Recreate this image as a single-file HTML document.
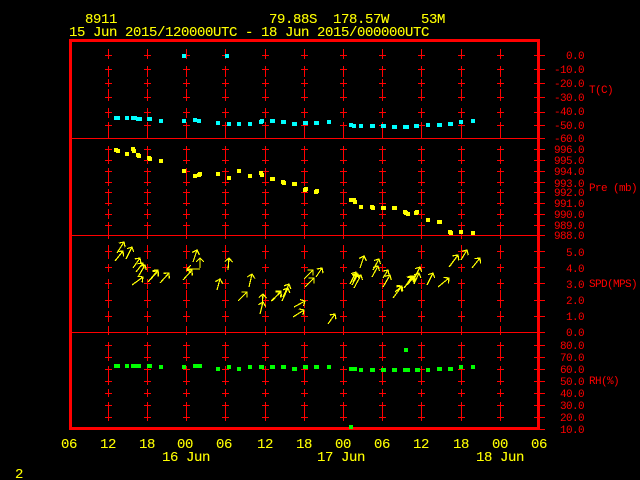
<!DOCTYPE html>
<html><head><meta charset="utf-8"><style>
html,body{margin:0;padding:0;background:#000;width:640px;height:480px;overflow:hidden}
svg{display:block}
text{font-family:"Liberation Mono",monospace;white-space:pre}
.y{fill:#ff0;stroke:#ff0;stroke-width:.1px;font-size:14px;letter-spacing:-.4px}
.r{fill:#f00;font-size:11px;letter-spacing:-.6px}
.e{text-anchor:end}
</style></head><body>
<svg width="640" height="480" viewBox="0 0 640 480" shape-rendering="crispEdges">
<defs>
<g id="c" fill="none" stroke="#f00" stroke-width="1">
<path d="M.5 49V59M.5 66V77M.5 79V87M.5 89V101M.5 108V118M.5 122V138M.5 146V164M.5 168V186M.5 189V206M.5 209V219M.5 222V239M.5 245V259M.5 264V272M.5 279V289M.5 290V308M.5 311V322M.5 326V335M.5 342V361M.5 366V385M.5 389V397M.5 402V421"/>
<path d="M-3 55.5H4M-3 69.5H4M-3 83.5H4M-3 97.5H4M-3 112.5H4M-3 125.5H4M-3 149.5H4M-3 160.5H4M-3 171.5H4M-3 182.5H4M-3 192.5H4M-3 203.5H4M-3 214.5H4M-3 225.5H4M-3 251.5H4M-3 267.5H4M-3 283.5H4M-3 300.5H4M-3 316.5H4M-3 345.5H4M-3 357.5H4M-3 369.5H4M-3 381.5H4M-3 393.5H4M-3 405.5H4M-3 417.5H4"/>
</g>
<marker id="a" markerUnits="userSpaceOnUse" orient="auto" markerWidth="14" markerHeight="14" refX="7" refY="7" overflow="visible">
<path d="M3.2 3.2L7 7L3.2 10.8" fill="none" stroke="#ff0" stroke-width="1.2"/>
</marker>
</defs>

<use href="#c" x="108"/><use href="#c" x="147"/><use href="#c" x="186"/><use href="#c" x="225"/><use href="#c" x="265"/><use href="#c" x="304"/><use href="#c" x="343"/><use href="#c" x="382"/><use href="#c" x="421"/><use href="#c" x="461"/><use href="#c" x="500"/>

<path fill="none" stroke="#f00" d="M72 138.500H545M72 235.500H545M72 332.500H545M534 55.500H545M534 69.500H545M534 83.500H545M534 97.500H545M534 112.500H545M534 125.500H545M534 149.500H545M534 160.500H545M534 171.500H545M534 182.500H545M534 192.500H545M534 203.500H545M534 214.500H545M534 225.500H545M534 251.500H545M534 267.500H545M534 283.500H545M534 300.500H545M534 316.500H545M534 345.500H545M534 357.500H545M534 369.500H545M534 381.500H545M534 393.500H545M534 405.500H545M534 417.500H545M534 429.500H545"/>
<rect x="70.500" y="40.500" width="468" height="388" fill="none" stroke="#f00" stroke-width="3"/>

<path fill="#0ff" d="M182 54h4v4h-4zM225 54h4v4h-4zM114 116h4v4h-4zM116 116h4v4h-4zM125 116h4v4h-4zM131 116h4v4h-4zM133 116h4v4h-4zM136 117h4v4h-4zM138 117h4v4h-4zM147 117h5v4h-5zM159 119h4v4h-4zM182 119h4v4h-4zM193 118h4v4h-4zM197 119h4v4h-4zM216 121h4v4h-4zM227 122h4v4h-4zM237 122h4v4h-4zM248 122h4v4h-4zM259 120h4v4h-4zM260 119h4v4h-4zM270 119h5v4h-5zM281 120h5v4h-5zM292 122h5v4h-5zM303 121h5v4h-5zM314 121h5v4h-5zM327 120h4v4h-4zM349 123h4v4h-4zM352 124h4v4h-4zM359 124h4v4h-4zM370 124h5v4h-5zM381 124h5v4h-5zM392 125h5v4h-5zM403 125h4v4h-4zM405 125h4v4h-4zM414 124h5v4h-5zM426 123h4v4h-4zM437 123h5v4h-5zM448 122h5v4h-5zM459 120h4v4h-4zM471 119h4v4h-4z"/>

<path fill="#ff0" d="M114 148h4v4h-4zM116 149h4v4h-4zM125 152h4v4h-4zM131 147h4v4h-4zM132 149h4v4h-4zM136 153h4v4h-4zM137 154h4v4h-4zM147 156h4v4h-4zM148 157h4v4h-4zM159 159h4v4h-4zM182 169h4v4h-4zM193 174h4v4h-4zM197 173h4v4h-4zM198 172h4v4h-4zM216 172h4v4h-4zM227 176h4v4h-4zM237 169h4v4h-4zM248 174h4v4h-4zM259 171h4v4h-4zM260 173h4v4h-4zM270 177h5v4h-5zM281 180h4v4h-4zM282 181h4v4h-4zM292 182h5v4h-5zM303 188h4v4h-4zM304 187h4v4h-4zM314 190h4v4h-4zM315 189h4v4h-4zM349 198h4v4h-4zM352 198h4v4h-4zM353 200h4v4h-4zM359 205h4v4h-4zM370 205h4v4h-4zM371 206h4v4h-4zM381 206h5v4h-5zM392 206h5v4h-5zM403 210h4v4h-4zM404 211h4v4h-4zM406 212h4v4h-4zM414 211h4v4h-4zM415 210h4v4h-4zM426 218h4v4h-4zM437 220h5v4h-5zM448 230h4v4h-4zM449 231h4v4h-4zM459 230h4v4h-4zM471 231h4v4h-4z"/>

<path fill="#0f0" d="M114 364h6v4h-6zM125 364h4v4h-4zM131 364h6v4h-6zM136 364h5v4h-5zM147 364h5v4h-5zM159 365h4v4h-4zM182 365h4v4h-4zM193 364h5v4h-5zM197 364h5v4h-5zM216 367h4v4h-4zM227 365h4v4h-4zM237 367h4v4h-4zM248 365h4v4h-4zM259 365h5v4h-5zM270 365h5v4h-5zM281 365h5v4h-5zM292 367h5v4h-5zM303 365h5v4h-5zM314 365h5v4h-5zM327 365h4v4h-4zM349 367h5v4h-5zM353 367h4v4h-4zM359 368h4v4h-4zM370 368h5v4h-5zM381 368h5v4h-5zM392 368h5v4h-5zM403 368h7v4h-7zM415 368h5v4h-5zM426 368h4v4h-4zM437 367h5v4h-5zM448 367h5v4h-5zM459 365h4v4h-4zM471 365h4v4h-4zM404 348h4v4h-4zM349 425h4v4h-4z"/>

<g stroke="#ff0" stroke-width="1.2" fill="none">
<line x1="117" y1="253" x2="124" y2="242" marker-end="url(#a)"/>
<line x1="115" y1="261" x2="123" y2="251" marker-end="url(#a)"/>
<line x1="126" y1="259" x2="132" y2="247" marker-end="url(#a)"/>
<line x1="133" y1="268" x2="140" y2="258" marker-end="url(#a)"/>
<line x1="136" y1="272" x2="143" y2="263" marker-end="url(#a)"/>
<line x1="138" y1="277" x2="145" y2="265" marker-end="url(#a)"/>
<line x1="132" y1="285" x2="143" y2="277" marker-end="url(#a)"/>
<line x1="148" y1="282" x2="158" y2="270" marker-end="url(#a)"/>
<line x1="150" y1="280" x2="158" y2="271" marker-end="url(#a)"/>
<line x1="160" y1="283" x2="169" y2="273" marker-end="url(#a)"/>
<line x1="183" y1="280" x2="192" y2="270" marker-end="url(#a)"/>
<line x1="200" y1="269" x2="187" y2="269" marker-end="url(#a)"/>
<line x1="200" y1="268" x2="200" y2="258" marker-end="url(#a)"/>
<line x1="193" y1="262" x2="197" y2="250" marker-end="url(#a)"/>
<line x1="217" y1="290" x2="220" y2="279" marker-end="url(#a)"/>
<line x1="228" y1="270" x2="229" y2="258" marker-end="url(#a)"/>
<line x1="249" y1="287" x2="252" y2="274" marker-end="url(#a)"/>
<line x1="238" y1="301" x2="247" y2="292" marker-end="url(#a)"/>
<line x1="260" y1="314" x2="263" y2="302" marker-end="url(#a)"/>
<line x1="262" y1="307" x2="263" y2="294" marker-end="url(#a)"/>
<line x1="271" y1="301" x2="281" y2="292" marker-end="url(#a)"/>
<line x1="272" y1="301" x2="281" y2="291" marker-end="url(#a)"/>
<line x1="282" y1="301" x2="288" y2="288" marker-end="url(#a)"/>
<line x1="283" y1="297" x2="289" y2="284" marker-end="url(#a)"/>
<line x1="294" y1="307" x2="305" y2="301" marker-end="url(#a)"/>
<line x1="293" y1="317" x2="304" y2="310" marker-end="url(#a)"/>
<line x1="305" y1="287" x2="314" y2="278" marker-end="url(#a)"/>
<line x1="304" y1="279" x2="313" y2="270" marker-end="url(#a)"/>
<line x1="316" y1="277" x2="322" y2="268" marker-end="url(#a)"/>
<line x1="328" y1="324" x2="335" y2="314" marker-end="url(#a)"/>
<line x1="360" y1="268" x2="364" y2="256" marker-end="url(#a)"/>
<line x1="350" y1="284" x2="356" y2="272" marker-end="url(#a)"/>
<line x1="352" y1="285" x2="358" y2="274" marker-end="url(#a)"/>
<line x1="354" y1="288" x2="361" y2="275" marker-end="url(#a)"/>
<line x1="353" y1="282" x2="357" y2="273" marker-end="url(#a)"/>
<line x1="372" y1="277" x2="378" y2="266" marker-end="url(#a)"/>
<line x1="373" y1="270" x2="379" y2="259" marker-end="url(#a)"/>
<line x1="383" y1="287" x2="390" y2="275" marker-end="url(#a)"/>
<line x1="383" y1="278" x2="388" y2="270" marker-end="url(#a)"/>
<line x1="393" y1="298" x2="402" y2="286" marker-end="url(#a)"/>
<line x1="395" y1="292" x2="402" y2="286" marker-end="url(#a)"/>
<line x1="405" y1="287" x2="412" y2="276" marker-end="url(#a)"/>
<line x1="404" y1="288" x2="413" y2="277" marker-end="url(#a)"/>
<line x1="407" y1="285" x2="414" y2="277" marker-end="url(#a)"/>
<line x1="408" y1="283" x2="415" y2="276" marker-end="url(#a)"/>
<line x1="414" y1="284" x2="419" y2="273" marker-end="url(#a)"/>
<line x1="415" y1="277" x2="420" y2="267" marker-end="url(#a)"/>
<line x1="427" y1="285" x2="433" y2="273" marker-end="url(#a)"/>
<line x1="438" y1="287" x2="449" y2="278" marker-end="url(#a)"/>
<line x1="449" y1="267" x2="458" y2="255" marker-end="url(#a)"/>
<line x1="450" y1="266" x2="458" y2="255" marker-end="url(#a)"/>
<line x1="461" y1="260" x2="467" y2="250" marker-end="url(#a)"/>
<line x1="472" y1="268" x2="480" y2="258" marker-end="url(#a)"/>
</g>

<g shape-rendering="auto">
<text class="y" x="85" y="23">8911</text>
<text class="y" x="269" y="23">79.88S</text>
<text class="y" x="333" y="23">178.57W</text>
<text class="y" x="421" y="23">53M</text>
<text class="y" x="69" y="36">15 Jun 2015/120000UTC - 18 Jun 2015/000000UTC</text>

<text class="y" x="61" y="448">06</text><text class="y" x="100" y="448">12</text><text class="y" x="139" y="448">18</text><text class="y" x="177" y="448">00</text><text class="y" x="216" y="448">06</text><text class="y" x="257" y="448">12</text><text class="y" x="296" y="448">18</text><text class="y" x="335" y="448">00</text><text class="y" x="374" y="448">06</text><text class="y" x="413" y="448">12</text><text class="y" x="453" y="448">18</text><text class="y" x="492" y="448">00</text><text class="y" x="531" y="448">06</text>
<text class="y" x="162" y="461">16 Jun</text><text class="y" x="317" y="461">17 Jun</text><text class="y" x="476" y="461">18 Jun</text>
<text class="y" x="15" y="478">2</text>

<text class="r e" x="584" y="59">0.0</text>
<text class="r e" x="584" y="73">-10.0</text>
<text class="r e" x="584" y="87">-20.0</text>
<text class="r e" x="584" y="101">-30.0</text>
<text class="r e" x="584" y="115">-40.0</text>
<text class="r e" x="584" y="129">-50.0</text>
<text class="r e" x="584" y="142">-60.0</text>
<text class="r e" x="584" y="153">996.0</text>
<text class="r e" x="584" y="164">995.0</text>
<text class="r e" x="584" y="175">994.0</text>
<text class="r e" x="584" y="187">993.0</text>
<text class="r e" x="584" y="196">992.0</text>
<text class="r e" x="584" y="207">991.0</text>
<text class="r e" x="584" y="218">990.0</text>
<text class="r e" x="584" y="229">989.0</text>
<text class="r e" x="584" y="239">988.0</text>
<text class="r e" x="584" y="256">5.0</text>
<text class="r e" x="584" y="272">4.0</text>
<text class="r e" x="584" y="288">3.0</text>
<text class="r e" x="584" y="304">2.0</text>
<text class="r e" x="584" y="320">1.0</text>
<text class="r e" x="584" y="336">0.0</text>
<text class="r e" x="584" y="349">80.0</text>
<text class="r e" x="584" y="361">70.0</text>
<text class="r e" x="584" y="373">60.0</text>
<text class="r e" x="584" y="385">50.0</text>
<text class="r e" x="584" y="397">40.0</text>
<text class="r e" x="584" y="409">30.0</text>
<text class="r e" x="584" y="421">20.0</text>
<text class="r e" x="584" y="433">10.0</text>
<text class="r" x="589" y="93">T(C)</text>
<text class="r" x="589" y="191">Pre (mb)</text>
<text class="r" x="589" y="287">SPD(MPS)</text>
<text class="r" x="589" y="384">RH(%)</text>
</g>
</svg>
</body></html>
